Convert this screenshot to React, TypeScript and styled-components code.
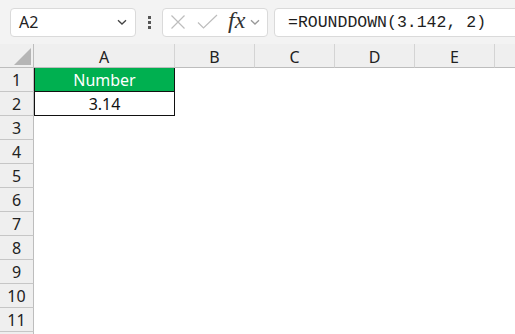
import styled, { createGlobalStyle } from "styled-components";

/* --- CSS --- */
const GlobalStyle = createGlobalStyle`
  html, body {
    margin: 0;
    padding: 0;
    background: #ffffff;
  }
  body {
    font-family: "Noto Sans", "Open Sans", sans-serif;
  }
`;

const Sheet = styled.div`
  width: 515px;
  height: 334px;
  overflow: hidden;
  background: #ffffff;
  display: flex;
  flex-direction: column;
`;

const Toolbar = styled.div`
  height: 44px;
  flex: none;
  display: flex;
  align-items: center;
  padding-left: 10px;
  background: #f3f3f3;
`;

const Field = styled.div<{ $width?: number }>`
  height: 29px;
  flex: ${(p) => (p.$width ? "none" : "1")};
  ${(p) => (p.$width ? `width: ${p.$width}px;` : "")}
  box-sizing: border-box;
  border: 1px solid #dadada;
  border-radius: 4px;
  background: #ffffff;
  display: flex;
  align-items: center;
`;

const NameBox = styled(Field)`
  justify-content: space-between;
  padding: 0 7px 0 8px;
  font-size: 16px;
  color: #222;
`;

const Grip = styled.div`
  width: 26px;
  flex: none;
  display: flex;
  flex-direction: column;
  align-items: center;
  gap: 2px;
  span {
    width: 3px;
    height: 3px;
    background: #555;
  }
`;

const FxBox = styled(Field)`
  padding-left: 7px;
`;

const FormulaBar = styled(Field)`
  margin-left: 6px;
  margin-right: -8px;
  padding-left: 13px;
  font-family: "Liberation Mono", "DejaVu Sans Mono", monospace;
  font-size: 16.5px;
  color: #1e1e1e;
`;

const FxText = styled.span`
  font-family: "Liberation Serif", "DejaVu Serif", serif;
  font-style: italic;
  font-size: 24px;
  color: #333;
  margin: -4px 4px 0 9px;
`;

const Row = styled.div<{ $header?: boolean; $height?: number }>`
  display: flex;
  height: ${(p) => p.$height ?? 24}px;
  flex: none;
  ${(p) => (p.$header ? "background: #efefef;" : "")}
`;

const Corner = styled.div`
  width: 34px;
  flex: none;
  box-sizing: border-box;
  border-right: 1px solid #bdbdbd;
  border-bottom: 1px solid #bdbdbd;
  display: flex;
  align-items: flex-end;
  justify-content: flex-end;
  padding: 0 2px 2px 0;
`;

const ColHeader = styled.div<{ $width: number }>`
  width: ${(p) => p.$width}px;
  flex: none;
  box-sizing: border-box;
  border-right: 1px solid #d4d4d4;
  border-bottom: 1px solid #bdbdbd;
  display: flex;
  align-items: center;
  justify-content: center;
  padding-top: 2px;
  font-size: 16px;
  color: #222;
`;

const RowHeader = styled.div`
  width: 34px;
  flex: none;
  box-sizing: border-box;
  background: #efefef;
  border-right: 1px solid #bdbdbd;
  border-bottom: 1px solid #c6c6c6;
  display: flex;
  align-items: center;
  justify-content: center;
  font-size: 16px;
  color: #222;
`;

const Cell = styled.div<{ $width: number; $fill?: string; $boxed?: boolean; $color?: string }>`
  width: ${(p) => p.$width}px;
  flex: none;
  box-sizing: border-box;
  background: ${(p) => p.$fill || "#ffffff"};
  color: ${(p) => p.$color || "#111"};
  display: flex;
  align-items: center;
  justify-content: center;
  font-size: 16px;
  ${(p) => (p.$boxed ? "border: 1px solid #111; border-top: none;" : "")}
`;

const columns = [
  { name: "A", width: 141 },
  { name: "B", width: 80 },
  { name: "C", width: 80 },
  { name: "D", width: 80 },
  { name: "E", width: 80 },
  { name: "", width: 60 },
];

const data: Record<number, { text: string; fill?: string; color?: string }> = {
  1: { text: "Number", fill: "#00b050", color: "#ffffff" },
  2: { text: "3.14" },
};

function Chevron({ size = 12, color = "#444" }: { size?: number; color?: string }) {
  return (
    <svg width={size} height={size} viewBox="0 0 12 12">
      <path d="M2 4.2 L6 8 L10 4.2" fill="none" stroke={color} strokeWidth="1.3" />
    </svg>
  );
}

function App() {
  const rows = Array.from({ length: 11 }, (_, i) => i + 1);

  return (
    <Sheet>
      <GlobalStyle />
      <Toolbar>
        <NameBox $width={126}>
          <span>A2</span>
          <Chevron />
        </NameBox>
        <Grip>
          <span />
          <span />
          <span />
        </Grip>
        <FxBox $width={106}>
          <svg width="16" height="16" viewBox="0 0 16 16">
            <path d="M1.5 1.5 L14.5 14.5 M14.5 1.5 L1.5 14.5" stroke="#bdbdbd" strokeWidth="1.2" fill="none" />
          </svg>
          <svg width="22" height="16" viewBox="0 0 22 16" style={{ marginLeft: 11 }}>
            <path d="M1 8.5 L6.5 14 L20 1" stroke="#bdbdbd" strokeWidth="1.2" fill="none" />
          </svg>
          <FxText>fx</FxText>
          <Chevron size={12} color="#999" />
        </FxBox>
        <FormulaBar>=ROUNDDOWN(3.142, 2)</FormulaBar>
      </Toolbar>

      <Row $header>
        <Corner>
          <svg width="17" height="17" viewBox="0 0 17 17">
            <path d="M17 0 L17 17 L0 17 Z" fill="#b5b5b5" />
          </svg>
        </Corner>
        {columns.map((c, i) => (
          <ColHeader key={i} $width={c.width}>
            {c.name}
          </ColHeader>
        ))}
      </Row>

      {rows.map((r) => (
        <Row key={r}>
          <RowHeader>{r}</RowHeader>
          {columns.map((c, i) => {
            const cell = c.name === "A" ? data[r] : undefined;
            return (
              <Cell key={i} $width={c.width} $fill={cell?.fill} $color={cell?.color} $boxed={!!cell}>
                {cell?.text}
              </Cell>
            );
          })}
        </Row>
      ))}
      <Row $height={4}>
        <RowHeader />
      </Row>
    </Sheet>
  );
}

export default App;
